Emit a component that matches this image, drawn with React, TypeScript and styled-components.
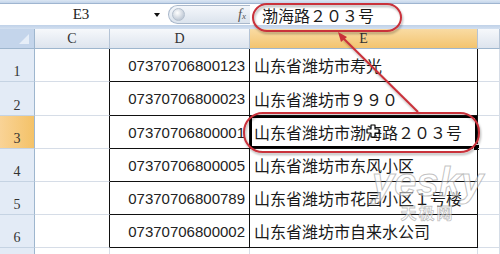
import styled, { createGlobalStyle } from "styled-components"

const GlobalStyle = createGlobalStyle`
  html, body {
    margin: 0;
    padding: 0;
    background: #ffffff;
  }
`

const COLS = "35px 75px 140px 228px 1fr"

const rows = [
  { num: "1", phone: "07370706800123", addr: "山东省潍坊市寿光", height: 33 },
  { num: "2", phone: "07370706800023", addr: "山东省潍坊市９９０", height: 34 },
  { num: "3", phone: "07370706800001", addr: "山东省潍坊市渤海路２０３号", height: 33, active: true },
  { num: "4", phone: "07370706800005", addr: "山东省潍坊市东风小区", height: 33 },
  { num: "5", phone: "07370706800789", addr: "山东省潍坊市花园小区１号楼", height: 33 },
  { num: "6", phone: "07370706800002", addr: "山东省潍坊市自来水公司", height: 33 },
]

export default function App() {
  return (
    <>
      <GlobalStyle />
      <Page>
        <TopStrip />
        <FormulaBar>
          <NameBox>
            <NameText>E3</NameText>
            <DropArrow />
          </NameBox>
          <FxButton>
            <FxKnob />
            <FxLabel>
              <i>f</i>
              <small>x</small>
            </FxLabel>
          </FxButton>
          <FormulaInput>渤海路２０３号</FormulaInput>
        </FormulaBar>
        <Band />

        <HeaderRow>
          <Corner>
            <CornerMark />
          </Corner>
          <ColHeader>C</ColHeader>
          <ColHeader>D</ColHeader>
          <ColHeader $active>E</ColHeader>
          <ColHeader />
        </HeaderRow>

        {rows.map((r) => (
          <Row key={r.num} $height={r.height}>
            <RowHeader $active={r.active}>{r.num}</RowHeader>
            <Cell $edge>{""}</Cell>
            <NumberCell>{r.phone}</NumberCell>
            <TextCell $active={r.active}>
              {r.addr}
              {r.active && <FillHandle />}
            </TextCell>
            <Cell />
          </Row>
        ))}
        <Row $height={8}>
          <RowHeader />
          <Cell />
          <Cell />
          <Cell />
          <Cell />
        </Row>

        <Watermark>
          <span className="brand">yesky</span>
          <span className="cn">天极网</span>
        </Watermark>

        <Annotations width="500" height="254" viewBox="0 0 500 254">
          <defs>
            <filter id="soft" x="-10%" y="-10%" width="120%" height="130%">
              <feDropShadow dx="1" dy="2" stdDeviation="1.2" floodColor="#000" floodOpacity="0.3" />
            </filter>
          </defs>
          <g filter="url(#soft)" fill="none" stroke="#c9303a" strokeWidth="2">
            <rect x="253" y="4" width="148" height="27" rx="14" />
            <rect x="244" y="113" width="235" height="39" rx="19" />
            <line x1="418" y1="112" x2="342" y2="37" />
          </g>
          <polygon points="338,32 347,37 341,42" fill="#c9303a" />
          <g transform="translate(367 125)">
            <path
              d="M4 0h4v4h4v4h-4v4h-4v-4h-4v-4h4z"
              fill="#fff"
              stroke="#000"
              strokeWidth="1.2"
              strokeLinejoin="round"
            />
          </g>
        </Annotations>
      </Page>
    </>
  )
}

const Page = styled.div`
  position: relative;
  width: 500px;
  height: 254px;
  overflow: hidden;
  background: #ffffff;
  font-family: "Liberation Sans", Arial, sans-serif;
`

const TopStrip = styled.div`
  height: 4px;
  box-sizing: border-box;
  background: linear-gradient(#dbe6f3, #c4d5ea);
  border-bottom: 1px solid #9fb5d0;
`

const FormulaBar = styled.div`
  display: flex;
  align-items: center;
  height: 21px;
  background: #ffffff;
`

const NameBox = styled.div`
  display: flex;
  align-items: center;
  width: 168px;
  height: 100%;
  padding-right: 6px;
  box-sizing: border-box;
`

const NameText = styled.span`
  flex: 1;
  text-align: center;
  padding-left: 8px;
  font-family: "Liberation Serif", serif;
  font-size: 15px;
  color: #222;
`

const DropArrow = styled.span`
  width: 0;
  height: 0;
  border-left: 3px solid transparent;
  border-right: 3px solid transparent;
  border-top: 4px solid #111;
  margin-right: 2px;
`

const FxButton = styled.div`
  display: flex;
  align-items: center;
  justify-content: space-between;
  width: 82px;
  height: 19px;
  box-sizing: border-box;
  padding: 0 4px 0 3px;
  border: 1px solid #a9b8cb;
  border-right: none;
  border-radius: 10px 0 0 10px;
  background: linear-gradient(#f4f7fb, #dbe3ed);
`

const FxKnob = styled.span`
  width: 11px;
  height: 11px;
  border-radius: 50%;
  background: radial-gradient(circle at 40% 35%, #ffffff, #c3ccd8 70%);
  border: 1px solid #b3bfcd;
`

const FxLabel = styled.span`
  font-family: "Liberation Serif", serif;
  font-size: 14px;
  color: #555;
  i {
    font-style: italic;
  }
  small {
    font-size: 9px;
    font-style: italic;
  }
`

const FormulaInput = styled.div`
  flex: 1;
  height: 100%;
  display: flex;
  align-items: center;
  padding-left: 12px;
  font-family: "Noto Sans CJK SC", sans-serif;
  font-size: 16px;
  color: #1a1a1a;
`

const Band = styled.div`
  height: 4px;
  background: linear-gradient(#bfd1e8, #d3e0f0);
`

const HeaderRow = styled.div`
  display: grid;
  grid-template-columns: ${COLS};
  height: 20px;
`

const Corner = styled.div`
  display: flex;
  align-items: flex-end;
  justify-content: flex-end;
  padding: 0 5px 4px 0;
  background: #c4d5eb;
  border-right: 1px solid #9eb6ce;
  border-bottom: 1px solid #9eb6ce;
`

const CornerMark = styled.span`
  width: 0;
  height: 0;
  border-left: 10px solid transparent;
  border-bottom: 10px solid #e6eef8;
`

const ColHeader = styled.div<{ $active?: boolean }>`
  display: flex;
  align-items: center;
  justify-content: center;
  font-family: "Liberation Serif", serif;
  font-size: 14px;
  color: #333;
  background: ${(p) =>
    p.$active
      ? "linear-gradient(#f9dba3, #f3c46f)"
      : "linear-gradient(#f6f8fb, #dde4ee)"};
  border-right: 1px solid #b5c4d6;
  border-bottom: 1px solid #9eb6ce;
`

const Row = styled.div<{ $height: number }>`
  display: grid;
  grid-template-columns: ${COLS};
  height: ${(p) => p.$height}px;
`

const RowHeader = styled.div<{ $active?: boolean }>`
  display: flex;
  align-items: flex-end;
  justify-content: center;
  padding-bottom: 1px;
  font-family: "Liberation Serif", serif;
  font-size: 14px;
  color: #333;
  background: ${(p) => (p.$active ? "linear-gradient(90deg, #f9d396, #f4c268)" : "#e3ebf6")};
  border-right: 1px solid #9eb6ce;
  border-bottom: 1px solid #c5d3e3;
`

const Cell = styled.div<{ $edge?: boolean }>`
  position: relative;
  display: flex;
  align-items: center;
  border-right: 1px solid ${(p) => (p.$edge ? "#111" : "#d6dde7")};
  border-bottom: 1px solid #d6dde7;
`

const NumberCell = styled(Cell)`
  justify-content: flex-end;
  padding-right: 4px;
  font-size: 15px;
  color: #222;
  border-right-color: #111;
  border-bottom-color: #111;
`

const TextCell = styled(Cell)<{ $active?: boolean }>`
  padding-left: 4px;
  font-family: "Noto Sans CJK SC", sans-serif;
  font-size: 16px;
  color: #1a1a1a;
  white-space: nowrap;
  border-right-color: #111;
  border-bottom-color: #111;
  box-shadow: ${(p) => (p.$active ? "inset 0 0 0 2px #000" : "none")};
`

const FillHandle = styled.span`
  position: absolute;
  right: -3px;
  bottom: -3px;
  width: 5px;
  height: 5px;
  background: #000;
  border: 1px solid #fff;
`

const Watermark = styled.div`
  position: absolute;
  left: 372px;
  top: 160px;
  display: flex;
  flex-direction: column;
  align-items: center;
  pointer-events: none;
  .brand {
    font-family: "Liberation Sans", sans-serif;
    font-weight: bold;
    font-style: italic;
    font-size: 40px;
    line-height: 44px;
    color: rgba(255, 255, 255, 0.55);
    -webkit-text-stroke: 1px rgba(140, 140, 140, 0.55);
  }
  .cn {
    font-family: "Noto Sans CJK SC", sans-serif;
    font-weight: bold;
    font-size: 16px;
    line-height: 16px;
    letter-spacing: 2px;
    color: rgba(255, 255, 255, 0.55);
    -webkit-text-stroke: 0.8px rgba(140, 140, 140, 0.55);
  }
`

const Annotations = styled.svg`
  position: absolute;
  left: 0;
  top: 0;
  pointer-events: none;
`
